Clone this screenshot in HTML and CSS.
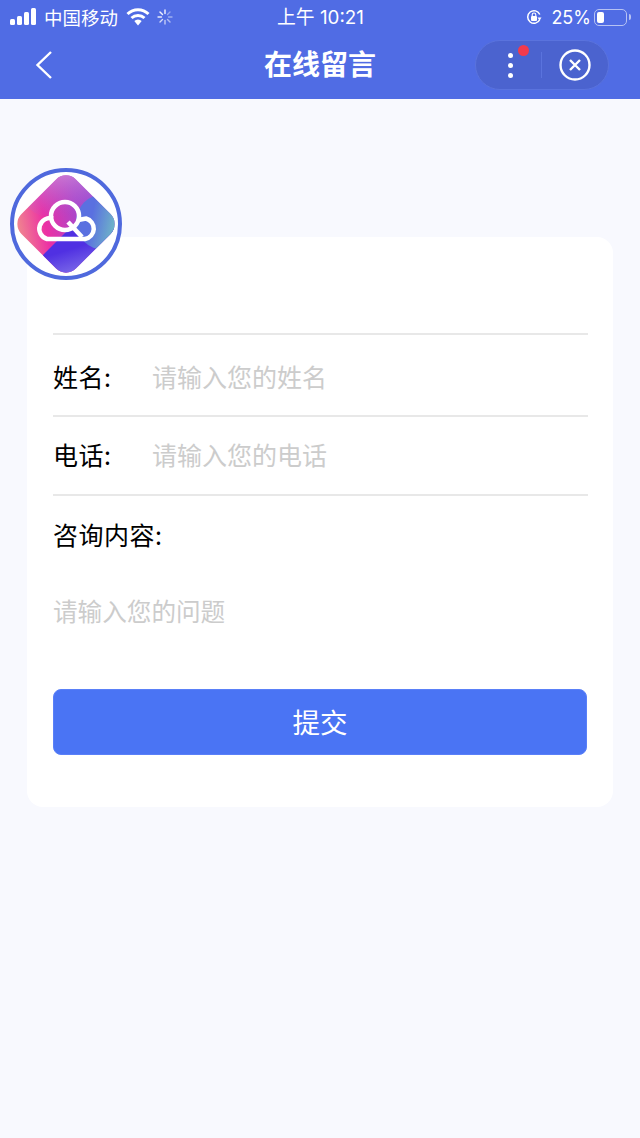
FILE: index.html
```html
<!DOCTYPE html>
<html>
<head>
  <title>在线留言</title>
  <link rel="stylesheet" href="styles.css">
</head>
<body>
  <header class="top">
    <div class="status">
      <div class="status-left">
        <svg class="signal" width="27" height="18" viewBox="0 0 27 18">
          <rect x="0" y="11" width="5" height="6" rx="1.5" fill="#fff"/>
          <rect x="7" y="8" width="5" height="9" rx="1.5" fill="#fff"/>
          <rect x="14" y="4" width="5" height="13" rx="1.5" fill="#fff"/>
          <rect x="21" y="0" width="5" height="17" rx="1.5" fill="#fff"/>
        </svg>
        <span class="carrier">中国移动</span>
        <svg class="wifi" width="24" height="18" viewBox="0 0 24 18">
          <path d="M1.5 6 A15 15 0 0 1 22.5 6" fill="none" stroke="#fff" stroke-width="3"/>
          <path d="M5.5 10 A9.5 9.5 0 0 1 18.5 10" fill="none" stroke="#fff" stroke-width="3"/>
          <path d="M8.3 13 A5.2 5.2 0 0 1 15.7 13 L12 17.5 Z" fill="#fff"/>
        </svg>
        <svg class="spinner" width="16" height="16" viewBox="0 0 16 16" stroke="#fff" stroke-width="1.4" stroke-linecap="round">
          <path d="M8 1v3.5" opacity=".95"/>
          <path d="M13 3l-2.5 2.5" opacity=".4"/>
          <path d="M15 8h-3.5" opacity=".45"/>
          <path d="M13 13l-2.5-2.5" opacity=".55"/>
          <path d="M8 15v-3.5" opacity=".65"/>
          <path d="M3 13l2.5-2.5" opacity=".75"/>
          <path d="M1 8h3.5" opacity=".85"/>
          <path d="M3 3l2.5 2.5" opacity=".9"/>
        </svg>
      </div>
      <div class="clock">上午 10:21</div>
      <div class="status-right">
        <svg class="lock" width="16" height="16" viewBox="0 0 16 16">
          <path d="M13.8 10.5 A6.3 6.3 0 1 1 13.8 5.5" fill="none" stroke="#fff" stroke-width="1.5"/>
          <path d="M15.5 8.5 L11.5 8.5 L13.5 11.5 Z" fill="#fff"/>
          <rect x="5" y="7" width="6" height="5" rx="1" fill="#fff"/>
          <path d="M6.2 7V5.8a1.8 1.8 0 0 1 3.6 0V7" fill="none" stroke="#fff" stroke-width="1.1"/>
        </svg>
        <span class="percent">25%</span>
        <div class="battery"><div class="battery-level"></div></div>
        <div class="battery-tip"></div>
      </div>
    </div>
    <div class="nav">
      <svg class="back" width="18" height="30" viewBox="0 0 18 30">
        <path d="M16 2 L2.5 15 L16 28" fill="none" stroke="#fff" stroke-width="2.4"/>
      </svg>
      <h1 class="title">在线留言</h1>
      <div class="capsule">
        <div class="capsule-more">
          <span class="dot"></span>
          <span class="dot"></span>
          <span class="dot"></span>
          <span class="badge"></span>
        </div>
        <div class="capsule-line"></div>
        <div class="capsule-close">
          <svg width="32" height="32" viewBox="0 0 32 32" fill="none" stroke="#fff">
            <circle cx="16" cy="16" r="14.5" stroke-width="2.4"/>
            <path d="M11 11 L21 21 M21 11 L11 21" stroke-width="2.4"/>
          </svg>
        </div>
      </div>
    </div>
  </header>

  <main class="page">
    <form class="card">
      <div class="logo">
        <svg width="112" height="112" viewBox="0 0 112 112">
          <defs>
            <linearGradient id="tile" x1="0" y1="0.6" x2="1" y2="0.4">
              <stop offset="0.08" stop-color="#f0858f"/>
              <stop offset="0.32" stop-color="#ec30a4"/>
              <stop offset="0.62" stop-color="#a848cc"/>
              <stop offset="1" stop-color="#7a50dc"/>
            </linearGradient>
            <linearGradient id="shine" x1="0" y1="0" x2="0.2" y2="1">
              <stop offset="0" stop-color="#d890d8"/>
              <stop offset="1" stop-color="#b058d0" stop-opacity="0"/>
            </linearGradient>
            <linearGradient id="side" x1="0" y1="0" x2="1" y2="0.2">
              <stop offset="0.35" stop-color="#5a70e0"/>
              <stop offset="1" stop-color="#7ad8ba"/>
            </linearGradient>
            <linearGradient id="under" x1="0.2" y1="0" x2="0.6" y2="1">
              <stop offset="0.45" stop-color="#5030e2"/>
              <stop offset="1" stop-color="#8c80ea"/>
            </linearGradient>
            <clipPath id="tile-clip">
              <rect x="17.5" y="17.5" width="77" height="77" rx="14" transform="rotate(45 56 56)"/>
            </clipPath>
          </defs>
          <circle cx="56" cy="56" r="54" fill="#fff" stroke="#4f69dd" stroke-width="4"/>
          <g clip-path="url(#tile-clip)">
            <rect x="0" y="0" width="112" height="112" fill="url(#tile)"/>
            <ellipse cx="54" cy="26" rx="42" ry="26" fill="url(#shine)"/>
            <path d="M33 87 L58 62 L104 56 L104 112 L40 112 Z" fill="url(#under)"/>
            <circle cx="94" cy="54" r="28" fill="url(#side)"/>
          </g>
          <g fill="none" stroke="#fff" stroke-width="4.5">
            <circle cx="55" cy="48" r="14"/>
            <path d="M58 54 L72 69"/>
            <path d="M43 50.5 A10.5 10.5 0 1 0 37 71 H75 A10.5 10.5 0 0 0 76 50.5 L68 52"/>
          </g>
        </svg>
      </div>

      <div class="row row-name">
        <label class="label" for="name">姓名:</label>
        <input class="field" type="text" id="name" placeholder="请输入您的姓名">
      </div>
      <div class="row row-phone">
        <label class="label" for="phone">电话:</label>
        <input class="field" type="text" id="phone" placeholder="请输入您的电话">
      </div>
      <div class="question">
        <label class="label" for="question">咨询内容:</label>
        <textarea class="area" id="question" placeholder="请输入您的问题"></textarea>
      </div>
      <button class="submit" type="button">提交</button>
    </form>
  </main>
</body>
</html>
```

FILE: styles.css
```css
* {
  box-sizing: border-box;
}
html,
body {
  margin: 0;
  padding: 0;
}
body {
  width: 640px;
  height: 1138px;
  overflow: hidden;
  background-color: #f8f9fe;
  font-family: "Noto Sans CJK SC", "Noto Sans", sans-serif;
  color: #000;
}

/* top bar */
.top {
  height: 99px;
  background-color: #506ce4;
  color: #fff;
}
.status {
  height: 32px;
  display: grid;
  grid-template-columns: 1fr auto 1fr;
  align-items: center;
  padding: 0 9px 0 10px;
  font-family: "Inter", "Noto Sans CJK SC", sans-serif;
  font-size: 18px;
}
.status-left,
.status-right {
  display: flex;
  align-items: center;
}
.status-right {
  justify-content: flex-end;
}
.carrier {
  margin-left: 7px;
  font-family: "Noto Sans CJK SC", sans-serif;
  font-size: 18.5px;
  line-height: 32px;
}
.wifi {
  margin-left: 8px;
}
.spinner {
  margin-left: 7px;
}
.clock {
  padding-top: 2px;
  font-size: 18.8px;
  line-height: 32px;
}
.lock {
  margin-right: 9px;
}
.percent {
  padding-top: 1px;
  line-height: 32px;
  margin-right: 3px;
}
.battery {
  width: 33px;
  height: 17px;
  padding: 2px;
  border: 1px solid #b6c2f3;
  border-radius: 5px;
}
.battery-level {
  width: 7px;
  height: 100%;
  background-color: #fff;
  border-radius: 2px;
}
.battery-tip {
  width: 2px;
  height: 6px;
  margin-left: 2px;
  background-color: #b6c2f3;
  border-radius: 0 2px 2px 0;
}
.nav {
  height: 66px;
  position: relative;
  display: flex;
  align-items: center;
  justify-content: space-between;
  padding: 0 31px 0 35px;
}
.title {
  position: absolute;
  left: 0;
  right: 0;
  top: -2px;
  margin: 0;
  text-align: center;
  font-size: 28px;
  font-weight: 700;
  line-height: 66px;
}
.capsule {
  width: 134px;
  height: 50px;
  display: flex;
  align-items: center;
  background-color: #4b63cf;
  border: 1px solid #5a73dd;
  border-radius: 25px;
}
.capsule-more {
  position: relative;
  width: 65px;
  display: flex;
  flex-direction: column;
  align-items: center;
  gap: 5px;
  padding-left: 3px;
}
.dot {
  width: 5px;
  height: 5px;
  background-color: #fff;
  border-radius: 50%;
}
.badge {
  position: absolute;
  top: -8px;
  left: 42px;
  width: 11px;
  height: 11px;
  background-color: #f23a4c;
  border-radius: 50%;
}
.capsule-line {
  width: 1px;
  height: 26px;
  background-color: #5a73dd;
}
.capsule-close {
  flex: 1;
  display: flex;
  justify-content: center;
  padding-right: 1px;
}

/* form card */
.page {
  padding: 138px 27px 0;
}
.card {
  position: relative;
  height: 570px;
  padding: 96px 25px 0 26px;
  background-color: #fff;
  border-radius: 16px;
}
.logo {
  position: absolute;
  top: -69px;
  left: -17px;
  width: 112px;
  height: 112px;
}
.logo svg {
  display: block;
}
.row {
  display: flex;
  align-items: center;
  border-top: 2px solid #e8e8e8;
}
.row-name {
  height: 82px;
  padding-top: 2px;
}
.row-phone {
  height: 79px;
  padding-bottom: 4px;
}
.label {
  font-size: 25px;
  line-height: 36px;
  letter-spacing: 0.5px;
}
.row .label {
  width: 99px;
}
.field {
  flex: 1;
  min-width: 0;
  padding: 0;
  border: none;
  outline: none;
  background: none;
  font-family: inherit;
  font-size: 25px;
  line-height: 36px;
}
.field::placeholder,
.area::placeholder {
  color: #cccccc;
  opacity: 1;
}
.question {
  height: 195px;
  padding-top: 20px;
  border-top: 2px solid #e8e8e8;
}
.question .label {
  display: block;
}
.area {
  display: block;
  width: 100%;
  height: 90px;
  margin-top: 40px;
  padding: 0;
  border: none;
  outline: none;
  resize: none;
  background: none;
  font-family: inherit;
  font-size: 24.6px;
  line-height: 36px;
}
.submit {
  display: block;
  width: 534px;
  height: 66px;
  padding: 0 0 2px;
  border: 1px solid #5a80f8;
  border-radius: 8px;
  background-color: #4a74f4;
  color: #fff;
  font-family: inherit;
  font-size: 27.5px;
}
```
